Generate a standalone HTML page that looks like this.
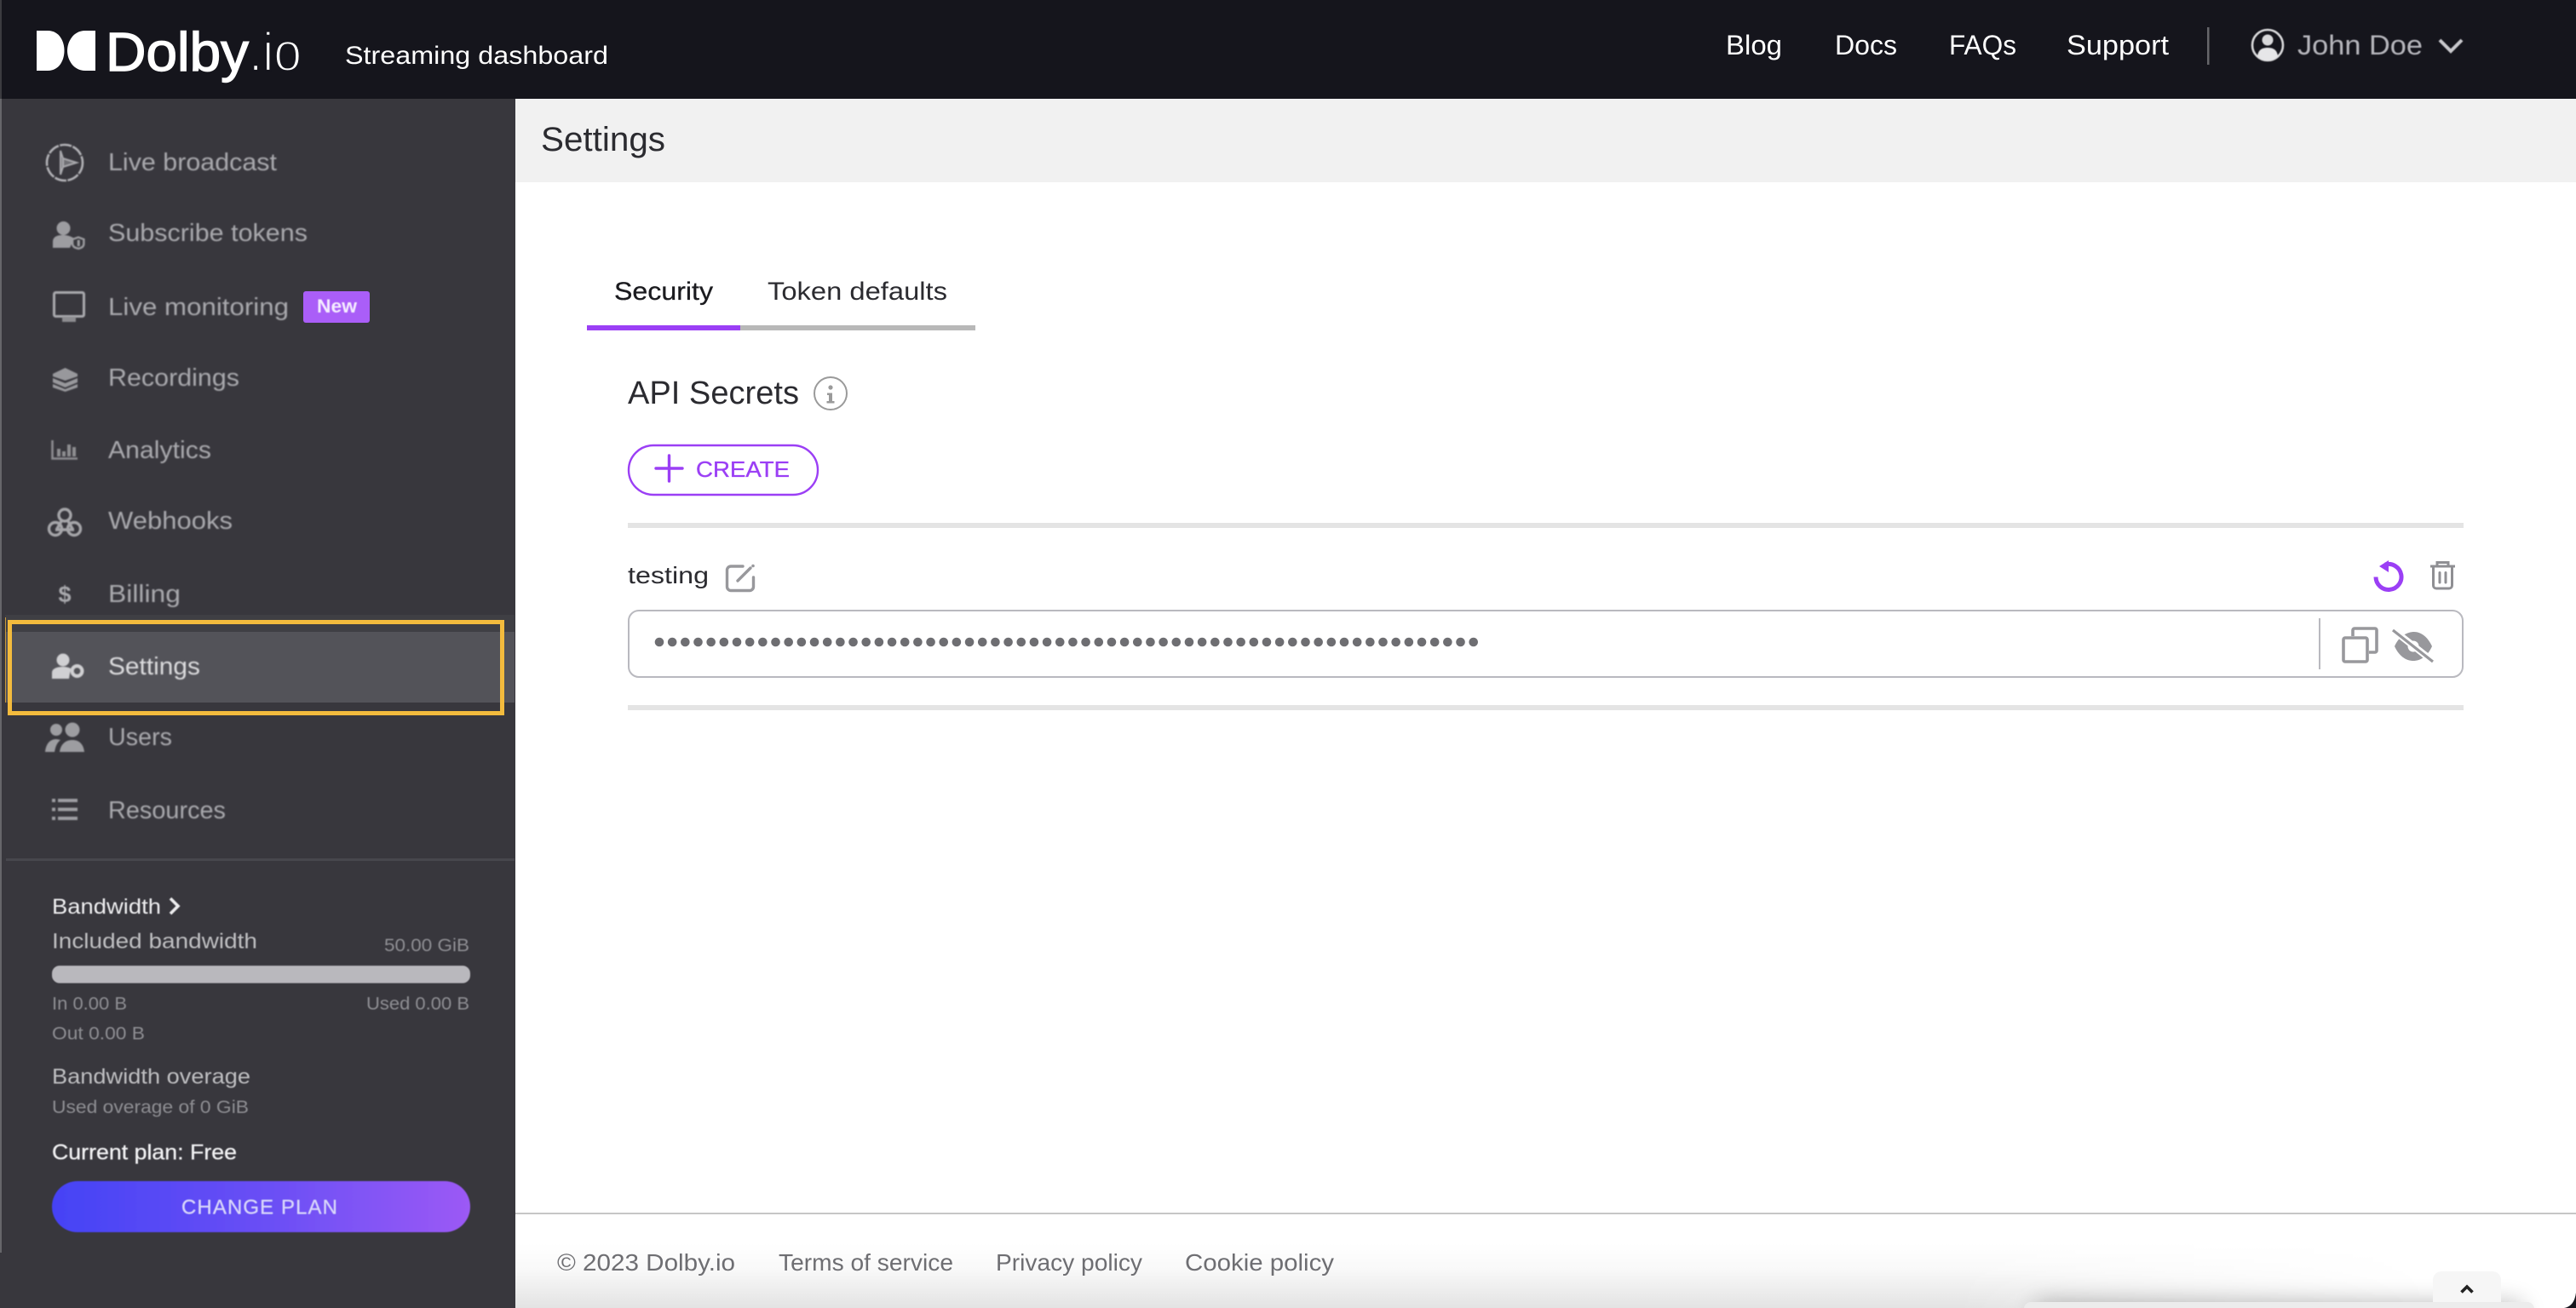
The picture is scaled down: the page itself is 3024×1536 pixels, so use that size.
<!DOCTYPE html>
<html lang="en">
<head>
<meta charset="utf-8">
<title>Dolby.io Streaming dashboard - Settings</title>
<style>
html,body{margin:0;padding:0;width:3024px;height:1536px;overflow:hidden;background:#fff}
svg{display:block;position:absolute;left:0;top:0}
text{font-family:"Liberation Sans",Arial,sans-serif}
</style>
</head>
<body>
<svg width="3024" height="1536" viewBox="0 0 3024 1536" xmlns="http://www.w3.org/2000/svg">
<defs>
<filter id="b1" x="-5%" y="-5%" width="110%" height="110%"><feGaussianBlur stdDeviation="0.8"/></filter>
<filter id="b2" x="-5%" y="-5%" width="110%" height="110%"><feGaussianBlur stdDeviation="0.5"/></filter>
<filter id="sh" x="-10%" y="-400%" width="120%" height="900%"><feGaussianBlur stdDeviation="14"/></filter>
<linearGradient id="btn" x1="0" x2="1" y1="0" y2="0"><stop offset="0" stop-color="#4543f5"/><stop offset=".55" stop-color="#6d50f5"/><stop offset="1" stop-color="#9c5af5"/></linearGradient>
<linearGradient id="foot" x1="0" x2="0" y1="0" y2="1"><stop offset="0" stop-color="#fff"/><stop offset=".4" stop-color="#f9f9f9"/><stop offset="1" stop-color="#e3e3e3"/></linearGradient>
<linearGradient id="fade" x1="0" x2="1" y1="0" y2="0"><stop offset="0" stop-color="#fff"/><stop offset=".7" stop-color="#fff"/><stop offset=".93" stop-color="#fff" stop-opacity="0"/></linearGradient>
<mask id="fm"><rect x="605" y="1460" width="2419" height="76" fill="url(#fade)"/></mask>
</defs>

<!-- page -->
<rect width="3024" height="1536" fill="#fff"/>

<!-- main title bar -->
<rect x="605" y="115" width="2419" height="99" fill="#f1f1f1"/>
<text x="635" y="177" font-size="40" fill="#2b2b30" textLength="146" lengthAdjust="spacingAndGlyphs">Settings</text>

<!-- tabs -->
<text x="721" y="352" font-size="30" fill="#1b1b1f" stroke="#1b1b1f" stroke-width=".3" textLength="116" lengthAdjust="spacingAndGlyphs">Security</text>
<text x="901" y="352" font-size="30" fill="#2b2b30" textLength="211" lengthAdjust="spacingAndGlyphs">Token defaults</text>
<rect x="689" y="382" width="456" height="6" fill="#b8b8b8"/>
<rect x="689" y="382" width="180" height="6" fill="#9b3ff5"/>

<!-- API secrets -->
<text x="737" y="474" font-size="38" fill="#2b2b30" textLength="201" lengthAdjust="spacingAndGlyphs">API Secrets</text>
<circle cx="975" cy="462" r="19" fill="none" stroke="#9a9a9a" stroke-width="2"/>
<circle cx="975" cy="455" r="2.6" fill="#9a9a9a"/>
<path d="M971 461.5h6v9.5h2.5v2.5h-9v-2.5h2.500v-7h-2z" fill="#9a9a9a"/>

<rect x="738" y="523" width="222" height="58" rx="29" fill="#fff" stroke="#9b3ff5" stroke-width="2.4"/>
<path d="M770 550H801M785.500 535V565" stroke="#9b3ff5" stroke-width="3.400" stroke-linecap="round" fill="none"/>
<text x="817" y="560" font-size="26" fill="#9b3ff5" stroke="#9b3ff5" stroke-width=".35" textLength="110" lengthAdjust="spacingAndGlyphs">CREATE</text>

<rect x="737" y="614" width="2155" height="6" fill="#e4e4e4"/>

<text x="737" y="685" font-size="28" fill="#2b2b30" textLength="95" lengthAdjust="spacingAndGlyphs">testing</text>
<!-- edit icon -->
<path d="M872 665H858a4.500 4.500 0 0 0-4.500 4.500V689a4.500 4.500 0 0 0 4.500 4.500H880a4.500 4.500 0 0 0 4.500-4.500V678" fill="none" stroke="#98989c" stroke-width="3.400" stroke-linecap="round"/>
<path d="M866 682L881 667" stroke="#98989c" stroke-width="3.400" stroke-linecap="round"/>
<circle cx="884" cy="664.500" r="1.800" fill="#98989c"/>

<!-- refresh icon -->
<path d="M2800 663A15 15 0 1 1 2789 677.500" fill="none" stroke="#9b3ff5" stroke-width="5"/>
<path d="M2804 658V672L2793 665Z" fill="#9b3ff5"/>
<!-- trash icon -->
<path d="M2853 665H2882M2861 665V660.500H2874V665" fill="none" stroke="#8f8f93" stroke-width="3"/>
<path d="M2856.500 666V687.500a3.500 3.500 0 0 0 3.500 3.500H2875a3.500 3.500 0 0 0 3.500-3.500V666" fill="none" stroke="#8f8f93" stroke-width="3"/>
<path d="M2864 672.500V684M2871 672.500V684" stroke="#8f8f93" stroke-width="3" stroke-linecap="round"/>

<!-- secret input -->
<rect x="738" y="717" width="2153" height="78" rx="12" fill="#fff" stroke="#b9b9bf" stroke-width="2"/>
<line x1="774" y1="754" x2="1742" y2="754" stroke="#6e6e72" stroke-width="10.600" stroke-linecap="round" stroke-dasharray="0 15.170"/>
<rect x="2722" y="726" width="2" height="60" fill="#b9b9bf"/>
<!-- copy icon -->
<path d="M2762 747V740a2 2 0 0 1 2-2H2788a2 2 0 0 1 2 2V764a2 2 0 0 1-2 2H2781" fill="none" stroke="#98989c" stroke-width="3.600"/>
<rect x="2751" y="749" width="28" height="28" rx="2" fill="none" stroke="#98989c" stroke-width="3.600"/>
<!-- hidden-eye icon -->
<path d="M2811 759C2816 747 2826 742 2834 742C2842 742 2850 748 2855 759C2850 770 2842 776 2833 776C2824 776 2816 770 2811 759Z" fill="#98989c"/>
<circle cx="2833" cy="759" r="6.500" fill="#fff"/>
<path d="M2809 739.500L2856 776.500" stroke="#fff" stroke-width="8"/>
<path d="M2809 740L2856 777" stroke="#98989c" stroke-width="3.200"/>

<rect x="737" y="828" width="2155" height="6" fill="#e4e4e4"/>

<!-- footer -->
<rect x="605" y="1424" width="2419" height="2" fill="#c6c6c6"/>
<rect x="605" y="1460" width="2419" height="76" fill="url(#foot)" mask="url(#fm)"/>
<g fill="#6e6e72" font-size="28">
<text x="654" y="1492" textLength="209" lengthAdjust="spacingAndGlyphs">© 2023 Dolby.io</text>
<text x="914" y="1492" textLength="205" lengthAdjust="spacingAndGlyphs">Terms of service</text>
<text x="1169" y="1492" textLength="172" lengthAdjust="spacingAndGlyphs">Privacy policy</text>
<text x="1391" y="1492" textLength="175" lengthAdjust="spacingAndGlyphs">Cookie policy</text>
</g>
<!-- collapsed panel -->
<rect x="2390" y="1530" width="570" height="30" fill="#000" opacity=".28" filter="url(#sh)"/>
<path d="M2856 1536V1503a10 10 0 0 1 10-10H2926a10 10 0 0 1 10 10V1536Z" fill="#f6f6f6"/>
<path d="M2376 1536V1537a8 8 0 0 1 8-8H2967a8 8 0 0 1 8 8V1536Z" fill="#ececec"/>
<path d="M2889.500 1517.500L2896 1511L2902.500 1517.500" fill="none" stroke="#222" stroke-width="3.600"/>
<path d="M3024 1518V1536H3010Q3022 1534 3024 1518Z" fill="#15151c"/>

<!-- header -->
<rect width="3024" height="116" fill="#15151c"/>
<rect width="2" height="116" fill="#3c3c40"/>
<path d="M43 36H56C70 36 75.500 49 75.500 59.500C75.500 70 70 83 56 83H43Z" fill="#fff"/>
<path d="M112 36H100C86 36 79 49 79 59.500C79 70 86 83 100 83H112Z" fill="#fff"/>
<text x="124" y="83" font-size="64" fill="#fff" stroke="#fff" stroke-width="1.400" textLength="168" lengthAdjust="spacingAndGlyphs">Dolby</text>
<text x="292" y="83" font-size="64" fill="#fff" stroke="#15151c" stroke-width="2.200" textLength="62" lengthAdjust="spacingAndGlyphs">.io</text>
<text x="405" y="75" font-size="30" fill="#fff" textLength="309" lengthAdjust="spacingAndGlyphs">Streaming dashboard</text>
<g fill="#fff" font-size="32">
<text x="2026" y="64" textLength="66" lengthAdjust="spacingAndGlyphs">Blog</text>
<text x="2154" y="64" textLength="73" lengthAdjust="spacingAndGlyphs">Docs</text>
<text x="2288" y="64" textLength="79" lengthAdjust="spacingAndGlyphs">FAQs</text>
<text x="2426" y="64" textLength="120" lengthAdjust="spacingAndGlyphs">Support</text>
</g>
<rect x="2591" y="32" width="2.500" height="44" fill="#66666a"/>
<g filter="url(#b2)">
<circle cx="2662" cy="53" r="18" fill="none" stroke="#d8d8da" stroke-width="2.600"/>
<circle cx="2662" cy="47" r="6.500" fill="#d8d8da"/>
<path d="M2650 66C2651 58 2656 56 2662 56C2668 56 2673 58 2674 66C2670 70 2666 71 2662 71C2658 71 2654 70 2650 66Z" fill="#e6e6e8"/>
<text x="2697" y="64" font-size="32" fill="#b4b4ba" textLength="147" lengthAdjust="spacingAndGlyphs">John Doe</text>
<path d="M2864 47L2877 60L2890 47" fill="none" stroke="#c8c8cc" stroke-width="4"/>
</g>

<!-- sidebar -->
<rect x="0" y="116" width="605" height="1420" fill="#38373d"/>
<rect x="0" y="116" width="2" height="1355" fill="#66666a"/>
<rect x="6" y="722" width="598" height="20" fill="#3f3f44"/>
<rect x="6" y="742" width="598" height="83" fill="#535359"/>

<g filter="url(#b1)">
<g font-size="29" fill="#a9a9ad">
<text x="127" y="200" textLength="198" lengthAdjust="spacingAndGlyphs">Live broadcast</text>
<text x="127" y="283" textLength="234" lengthAdjust="spacingAndGlyphs">Subscribe tokens</text>
<text x="127" y="370" textLength="212" lengthAdjust="spacingAndGlyphs">Live monitoring</text>
<text x="127" y="453" textLength="154" lengthAdjust="spacingAndGlyphs">Recordings</text>
<text x="127" y="538" textLength="121" lengthAdjust="spacingAndGlyphs">Analytics</text>
<text x="127" y="621" textLength="146" lengthAdjust="spacingAndGlyphs">Webhooks</text>
<text x="127" y="707" textLength="85" lengthAdjust="spacingAndGlyphs">Billing</text>
<text x="127" y="792" fill="#dcdcde" textLength="108" lengthAdjust="spacingAndGlyphs">Settings</text>
<text x="127" y="875" textLength="75" lengthAdjust="spacingAndGlyphs">Users</text>
<text x="127" y="961" textLength="138" lengthAdjust="spacingAndGlyphs">Resources</text>
</g>

<!-- live broadcast -->
<circle cx="76" cy="191" r="21" fill="none" stroke="#b4b4b8" stroke-width="2.600" stroke-dasharray="14 1.500"/>
<path d="M71 177V205L74 196V186ZM74 186L90 191L74 196" fill="#707074" stroke="#a9a9ad" stroke-width="2"/>
<!-- subscribe tokens -->
<circle cx="74.500" cy="268" r="8" fill="#9d9da1"/>
<path d="M62 291V284C62 278 67 276 74 276C80 276 84 278 87 280L82 291Z" fill="#9d9da1"/>
<path d="M85 281L92 278.500L98.500 281V286C98.500 290 95 291.500 92 292C89 291.500 85 290 85 286Z" fill="#38373d" stroke="#9d9da1" stroke-width="2.200"/>
<path d="M91 282h2.500v7H91z" fill="#9d9da1"/>
<!-- live monitoring -->
<rect x="63.500" y="343.500" width="35" height="28" rx="2" fill="none" stroke="#a9a9ad" stroke-width="3"/>
<rect x="73" y="372" width="16" height="6" fill="#8c8c90"/>
<!-- recordings -->
<path d="M76.500 432L91 439V442L76.500 447L62 442V439Z" fill="#98989c"/>
<path d="M62 444L76.500 450L91 444V449L76.500 455L62 449Z" fill="#98989c"/>
<path d="M62 451L76.500 457L91 451V455L76.500 460L62 455Z" fill="#98989c"/>
<!-- analytics -->
<path d="M61.500 517V538.500H91" fill="none" stroke="#8d8d91" stroke-width="2.600"/>
<path d="M67 527h4v9h-4zM73 530h4v6h-4zM79 522h4v14h-4zM85 525h4v11h-4z" fill="#8d8d91"/>
<!-- webhooks -->
<g fill="none" stroke="#a5a5a9" stroke-width="3.400">
<circle cx="76" cy="605" r="7"/>
<circle cx="65" cy="621" r="7.500"/>
<circle cx="87" cy="621" r="7.500"/>
<path d="M72 612L67 621M80 612L85 621M65 622H87"/>
</g>
<!-- billing -->
<text x="76" y="707" font-size="27" font-weight="700" fill="#a9a9ad" text-anchor="middle">$</text>
<!-- settings -->
<circle cx="74" cy="775" r="7.500" fill="#d0d0d3"/>
<path d="M61 797V790C61 785 67 783 74 783C78 783 81 784 83 785L81 797Z" fill="#d0d0d3"/>
<circle cx="90.500" cy="788" r="6" fill="#535359" stroke="#d0d0d3" stroke-width="4"/>
<!-- users -->
<circle cx="66" cy="857" r="7" fill="#9d9da1"/>
<circle cx="85" cy="857" r="8.500" fill="#9d9da1"/>
<path d="M53 883C54 873 59 868 66 868C68 868 69 868.500 71 869C66 873 65 878 64 883Z" fill="#9d9da1"/>
<path d="M70 883C71 874 77 869 85 869C93 869 98 874 99 883Z" fill="#9d9da1"/>
<!-- resources -->
<path d="M68 940H91M68 950.500H91M68 961H91" stroke="#9d9da1" stroke-width="4"/>
<path d="M61 940H65M61 950.500H65M61 961H65" stroke="#9d9da1" stroke-width="4"/>
</g>

<!-- new badge -->
<rect x="356" y="342" width="78" height="37" rx="3" fill="#aa5ef8"/>
<text x="372" y="367" font-size="22" font-weight="700" fill="#f4ecff" textLength="47" lengthAdjust="spacingAndGlyphs" filter="url(#b2)">New</text>

<!-- highlight outline -->
<rect x="11.500" y="730.500" width="578" height="107" fill="none" stroke="#f3bb3d" stroke-width="5"/>
<rect x="6" y="725" width="1" height="100" fill="#c99a3a"/>

<!-- sidebar divider -->
<rect x="7" y="1008" width="597" height="3" fill="#47474d"/>

<!-- bandwidth panel -->
<g filter="url(#b2)">
<text x="61" y="1073" font-size="25" fill="#ececee" textLength="128" lengthAdjust="spacingAndGlyphs">Bandwidth</text>
<path d="M200 1055L209 1064L200 1073" fill="none" stroke="#ececee" stroke-width="3.600"/>
<text x="61" y="1113.500" font-size="25" fill="#bdbdc0" textLength="241" lengthAdjust="spacingAndGlyphs">Included bandwidth</text>
<text x="451" y="1117" font-size="21" fill="#8d8d92" textLength="100" lengthAdjust="spacingAndGlyphs">50.00 GiB</text>
<rect x="61" y="1134" width="491" height="20.500" rx="9" fill="#b9b8bd"/>
<text x="61" y="1185.500" font-size="21" fill="#8d8d92" textLength="88" lengthAdjust="spacingAndGlyphs">In 0.00 B</text>
<text x="430" y="1185.500" font-size="21" fill="#8d8d92" textLength="121" lengthAdjust="spacingAndGlyphs">Used 0.00 B</text>
<text x="61" y="1220.500" font-size="21" fill="#8d8d92" textLength="109" lengthAdjust="spacingAndGlyphs">Out 0.00 B</text>
<text x="61" y="1272.500" font-size="25" fill="#bdbdc0" textLength="233" lengthAdjust="spacingAndGlyphs">Bandwidth overage</text>
<text x="61" y="1307" font-size="21" fill="#8d8d92" textLength="231" lengthAdjust="spacingAndGlyphs">Used overage of 0 GiB</text>
<text x="61" y="1361.500" font-size="25" fill="#f0f0f2" stroke="#f0f0f2" stroke-width=".3" textLength="217" lengthAdjust="spacingAndGlyphs">Current plan: Free</text>
<rect x="61" y="1387" width="491" height="60" rx="30" fill="url(#btn)"/>
<text x="213" y="1425.500" font-size="24" fill="#dcd8fb" textLength="183" lengthAdjust="spacing">CHANGE PLAN</text>
</g>
</svg>
</body>
</html>
